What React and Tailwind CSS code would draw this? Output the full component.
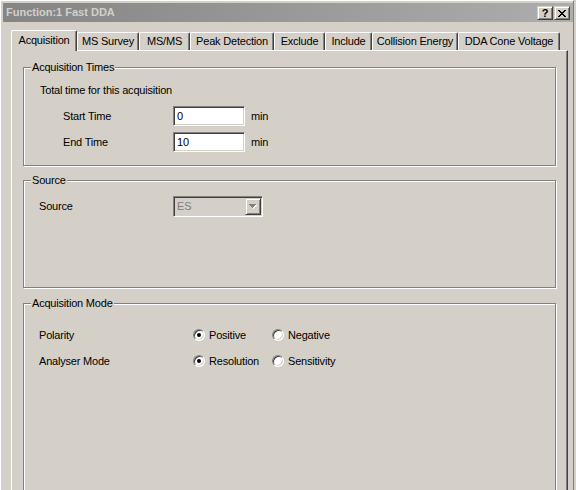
import React from "react";

const tabs = [
  { label: "Acquisition", w: "w-[66px]", sel: true },
  { label: "MS Survey", w: "w-[62px]" },
  { label: "MS/MS", w: "w-[51px]" },
  { label: "Peak Detection", w: "w-[84px]" },
  { label: "Exclude", w: "w-[51px]" },
  { label: "Include", w: "w-[47px]" },
  { label: "Collision Energy", w: "w-[86px]" },
  { label: "DDA Cone Voltage", w: "w-[102px]" },
];

function GroupBox({ label, className = "", children }) {
  return (
    <div
      className={`relative ml-[11px] w-[533px] border border-[#808080] shadow-[inset_1px_1px_0_#fff,1px_1px_0_#fff] ${className}`}
    >
      <span className="absolute -top-[7px] left-[7px] bg-[#d4d0c8] px-[1px] leading-[13px]">
        {label}
      </span>
      {children}
    </div>
  );
}

function TextBox({ value }) {
  return (
    <div className="flex h-[20px] w-[72px] items-center border border-t-[#808080] border-l-[#808080] border-b-white border-r-white bg-white pl-[3px] shadow-[inset_1px_1px_0_#404040,inset_-1px_-1px_0_#d4d0c8]">
      {value}
    </div>
  );
}

function Radio({ checked, label }) {
  return (
    <div className="flex items-center">
      <div className="flex h-[12px] w-[12px] items-center justify-center rounded-full border border-t-[#808080] border-l-[#808080] border-b-white border-r-white bg-white shadow-[inset_1px_1px_0_#404040,inset_-1px_-1px_0_#d4d0c8]">
        {checked && <div className="h-[4px] w-[4px] rounded-full bg-black" />}
      </div>
      <span className="ml-[4px]">{label}</span>
    </div>
  );
}

function CloseGlyph() {
  const rects = [
    [0, 0, 2], [6, 0, 2],
    [1, 1, 2], [5, 1, 2],
    [2, 2, 4],
    [3, 3, 2],
    [2, 4, 4],
    [1, 5, 2], [5, 5, 2],
    [0, 6, 2], [6, 6, 2],
  ];
  return (
    <svg width="8" height="7" viewBox="0 0 8 7" shapeRendering="crispEdges">
      {rects.map(([x, y, w], i) => (
        <rect key={i} x={x} y={y} width={w} height="1" fill="#000" />
      ))}
    </svg>
  );
}

function CaptionButton({ children, className = "" }) {
  return (
    <div
      className={`flex h-[14px] w-[16px] items-center justify-center border border-t-[#d4d0c8] border-l-[#d4d0c8] border-b-[#404040] border-r-[#404040] bg-[#d4d0c8] shadow-[inset_1px_1px_0_#fff,inset_-1px_-1px_0_#808080] ${className}`}
    >
      {children}
    </div>
  );
}

export default function App() {
  return (
    <div className="relative h-[490px] w-[576px] overflow-hidden bg-[#d4d0c8] font-['Liberation_Sans',Arial,sans-serif] text-[11px] leading-[13px] tracking-[-0.2px] text-black">
      <div className="h-full w-[574px] border-l border-t border-r border-l-white border-t-white border-r-[#808080] pl-[2px] pt-[2px]">
        {/* Title bar */}
        <div className="flex h-[19px] w-[570px] items-start bg-gradient-to-r from-[#858585] to-[#adadad]">
          <span className="self-center pl-[3px] font-bold tracking-normal text-[#d4d0c8]">Function:1 Fast DDA</span>
          <div className="ml-auto mr-[3px] mt-[3px] flex gap-[1px]">
            <CaptionButton>
              <span className="text-[11px] font-bold leading-[11px]">?</span>
            </CaptionButton>
            <CaptionButton>
              <CloseGlyph />
            </CaptionButton>
          </div>
        </div>

        {/* Tabs */}
        <div className="ml-[8px] mt-[8px] flex h-[20px] items-end">
          {tabs.map((t) =>
            t.sel ? (
              <div
                key={t.label}
                className={`relative z-10 -mb-[1px] flex h-[21px] ${t.w} items-center justify-center rounded-t-[2px] border-l border-t border-r border-l-white border-t-white border-r-[#404040] bg-[#d4d0c8] pb-[2px] shadow-[inset_-1px_0_0_#808080]`}
              >
                {t.label}
              </div>
            ) : (
              <div
                key={t.label}
                className={`flex h-[18px] ${t.w} items-center justify-center rounded-t-[2px] border-l border-t border-r border-l-white border-t-white border-r-[#404040] bg-[#d4d0c8] shadow-[inset_-1px_0_0_#808080]`}
              >
                {t.label}
              </div>
            )
          )}
        </div>

        {/* Tab panel */}
        <div className="ml-[8px] h-[460px] w-[557px] border-l border-t border-r border-l-white border-t-white border-r-[#404040] pt-[16px] shadow-[inset_-1px_0_0_#808080]">
          <GroupBox label="Acquisition Times" className="h-[99px] pl-[16px] pt-[16px]">
            <div>Total time for this acquisition</div>
            <div className="mt-[9px] flex h-[20px] items-center">
              <span className="w-[133px] pl-[23px]">Start Time</span>
              <TextBox value="0" />
              <span className="ml-[6px]">min</span>
            </div>
            <div className="mt-[6px] flex h-[20px] items-center">
              <span className="w-[133px] pl-[23px]">End Time</span>
              <TextBox value="10" />
              <span className="ml-[6px]">min</span>
            </div>
          </GroupBox>

          <GroupBox label="Source" className="mt-[14px] h-[108px] pl-[15px] pt-[15px]">
            <div className="flex h-[21px] items-center">
              <span className="w-[134px]">Source</span>
              <div className="flex h-[21px] w-[90px] items-center border border-t-[#808080] border-l-[#808080] border-b-white border-r-white bg-[#d4d0c8] p-[1px] shadow-[inset_1px_1px_0_#404040,inset_-1px_-1px_0_#d4d0c8]">
                <span className="flex-1 pl-[2px] text-[#808080]">ES</span>
                <div className="flex h-[17px] w-[16px] items-center justify-center border border-t-[#d4d0c8] border-l-[#d4d0c8] border-b-[#404040] border-r-[#404040] shadow-[inset_1px_1px_0_#fff,inset_-1px_-1px_0_#808080]">
                  <svg width="8" height="5" viewBox="0 0 8 5" shapeRendering="crispEdges">
                    <rect x="1" y="1" width="7" height="1" fill="#fff" />
                    <rect x="2" y="2" width="5" height="1" fill="#fff" />
                    <rect x="3" y="3" width="3" height="1" fill="#fff" />
                    <rect x="4" y="4" width="1" height="1" fill="#fff" />
                    <rect x="0" y="0" width="7" height="1" fill="#808080" />
                    <rect x="1" y="1" width="5" height="1" fill="#808080" />
                    <rect x="2" y="2" width="3" height="1" fill="#808080" />
                    <rect x="3" y="3" width="1" height="1" fill="#808080" />
                  </svg>
                </div>
              </div>
            </div>
          </GroupBox>

          <GroupBox label="Acquisition Mode" className="mt-[15px] h-[300px] pl-[15px] pt-[23px]">
            <div className="flex h-[16px] items-center">
              <span className="w-[154px]">Polarity</span>
              <div className="w-[79px]">
                <Radio checked label="Positive" />
              </div>
              <Radio label="Negative" />
            </div>
            <div className="mt-[10px] flex h-[16px] items-center">
              <span className="w-[154px]">Analyser Mode</span>
              <div className="w-[79px]">
                <Radio checked label="Resolution" />
              </div>
              <Radio label="Sensitivity" />
            </div>
          </GroupBox>
        </div>
      </div>
    </div>
  );
}
